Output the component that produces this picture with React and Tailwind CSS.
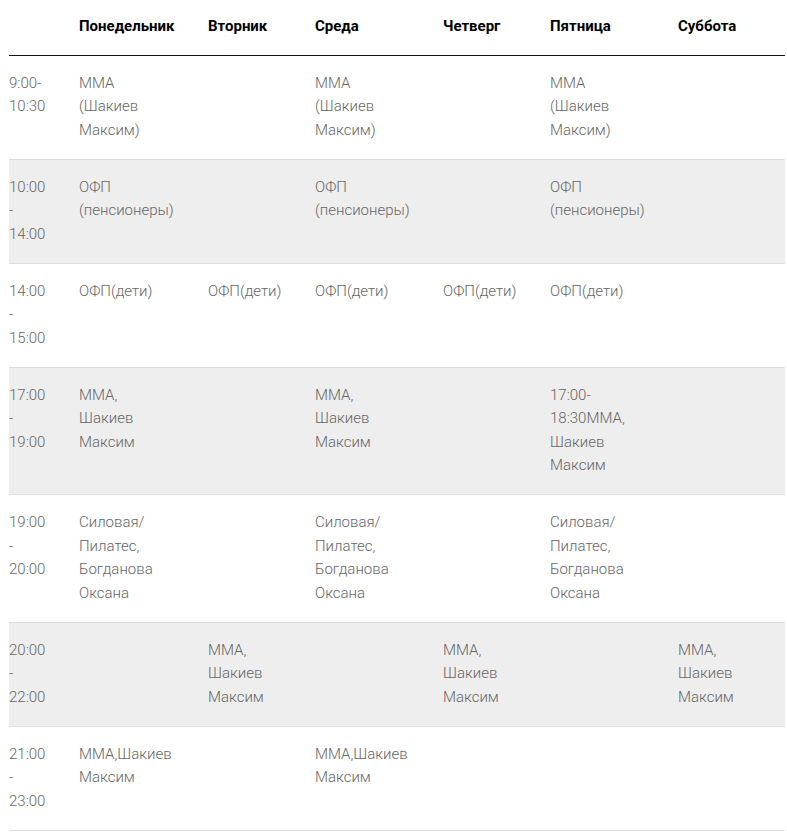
const days = ['Понедельник', 'Вторник', 'Среда', 'Четверг', 'Пятница', 'Суббота']

const rows = [
  { time: '9:00-10:30', cells: ['MMA (Шакиев Максим)', '', 'MMA (Шакиев Максим)', '', 'MMA (Шакиев Максим)', ''] },
  { time: '10:00 - 14:00', cells: ['ОФП (пенсионеры)', '', 'ОФП (пенсионеры)', '', 'ОФП (пенсионеры)', ''] },
  { time: '14:00 - 15:00', cells: ['ОФП(дети)', 'ОФП(дети)', 'ОФП(дети)', 'ОФП(дети)', 'ОФП(дети)', ''] },
  { time: '17:00 - 19:00', cells: ['MMA, Шакиев Максим', '', 'MMA, Шакиев Максим', '', '17:00-18:30MMA, Шакиев Максим', ''] },
  {
    time: '19:00 - 20:00',
    cells: ['Силовая/ Пилатес, Богданова Оксана', '', 'Силовая/ Пилатес, Богданова Оксана', '', 'Силовая/ Пилатес, Богданова Оксана', ''],
  },
  { time: '20:00 - 22:00', cells: ['', 'MMA, Шакиев Максим', '', 'MMA, Шакиев Максим', '', 'MMA, Шакиев Максим'] },
  { time: '21:00 - 23:00', cells: ['MMA,Шакиев Максим', '', 'MMA,Шакиев Максим', '', '', ''] },
]

// column widths taken from the reference
const cols = ['w-[70px]', 'w-[129px]', 'w-[107px]', 'w-[128px]', 'w-[107px]', 'w-[128px]', 'w-[107px]']
const pads = ['pr-[30px]', 'pr-[47px]', 'pr-[25px]', 'pr-[46px]', 'pr-[25px]', 'pr-[46px]', 'pr-[25px]']

const App = () => {
  return (
    <div className="min-h-[836px] bg-white font-['Roboto',sans-serif] text-[15px] leading-[23.5px]">
      <table className="ml-[9px] w-[776px] table-fixed border-collapse">
        <colgroup>
          {cols.map((c, i) => (
            <col key={i} className={c} />
          ))}
        </colgroup>
        <thead>
          <tr className="border-b border-[#111]">
            <th className="pt-[15px] pb-4" />
            {days.map((d, i) => (
              <th key={d} className={`pt-[15px] pb-4 text-left align-top font-bold text-black ${pads[i + 1]}`}>
                {d}
              </th>
            ))}
          </tr>
        </thead>
        <tbody>
          {rows.map((row, r) => (
            <tr key={r} className={`border-b border-[#ddd] ${r % 2 === 1 ? 'bg-[#eee]' : 'bg-white'}`}>
              <td className={`pt-4 pb-[16.5px] align-top font-light text-[#666] ${pads[0]}`}>{row.time}</td>
              {row.cells.map((c, i) => (
                <td key={i} className={`pt-4 pb-[16.5px] align-top font-light text-[#666] ${pads[i + 1]}`}>
                  {c}
                </td>
              ))}
            </tr>
          ))}
        </tbody>
      </table>
    </div>
  )
}

export default App
